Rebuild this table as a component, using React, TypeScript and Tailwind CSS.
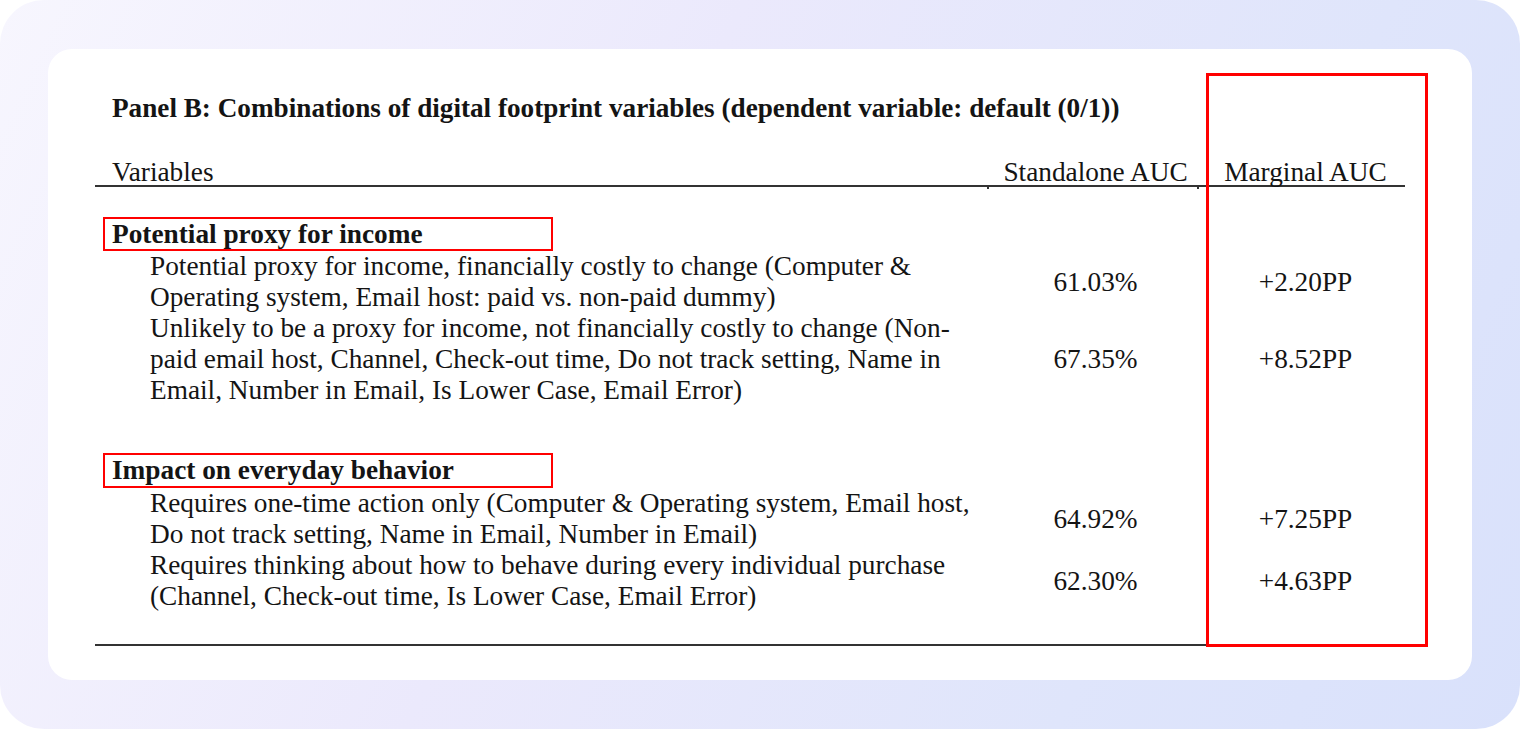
export default function App() {
  const rows1 = [
    {
      lines: [
        "Potential proxy for income, financially costly to change (Computer &",
        "Operating system, Email host: paid vs. non-paid dummy)",
      ],
      s: "61.03%",
      m: "+2.20PP",
    },
    {
      lines: [
        "Unlikely to be a proxy for income, not financially costly to change (Non-",
        "paid email host, Channel, Check-out time, Do not track setting, Name in",
        "Email, Number in Email, Is Lower Case, Email Error)",
      ],
      s: "67.35%",
      m: "+8.52PP",
    },
  ];
  const rows2 = [
    {
      lines: [
        "Requires one-time action only (Computer & Operating system, Email host,",
        "Do not track setting, Name in Email, Number in Email)",
      ],
      s: "64.92%",
      m: "+7.25PP",
    },
    {
      lines: [
        "Requires thinking about how to behave during every individual purchase",
        "(Channel, Check-out time, Is Lower Case, Email Error)",
      ],
      s: "62.30%",
      m: "+4.63PP",
    },
  ];

  const Row = ({ r }: { r: { lines: string[]; s: string; m: string } }) => (
    <div className="grid grid-cols-[890px_221px_199px] items-center">
      <div className="pl-[55px] text-[27.3px] leading-[31px]">
        {r.lines.map((l, i) => (
          <div key={i} className="whitespace-nowrap">
            {l}
          </div>
        ))}
      </div>
      <div className="text-center text-[27.3px] leading-[31px]">{r.s}</div>
      <div className="text-center text-[27.3px] leading-[31px]">{r.m}</div>
    </div>
  );

  return (
    <div className="w-[1520px] h-[736px] bg-white">
      <div className="w-[1520px] h-[729px] rounded-[44px] bg-[linear-gradient(115deg,#f7f6fe_0%,#ebe9fc_40%,#dfe5fb_75%,#d9e1fb_100%)] pt-[49px] px-[48px]">
        <div className="relative h-[631px] rounded-[24px] bg-white pl-[47px] pr-[67px] pt-[44px] font-['Liberation_Serif',serif] text-[#141414]">
          <div className="pl-[17px] text-[27.2px] font-bold leading-[30px] whitespace-nowrap">
            Panel B: Combinations of digital footprint variables (dependent variable: default (0/1))
          </div>

          <div className="relative mt-[34px] grid grid-cols-[890px_221px_199px] items-center border-b-2 border-[#333] h-[30px] text-[27.3px] leading-[31px]">
            <div className="pl-[17px]">Variables</div>
            <div className="text-center">Standalone AUC</div>
            <div className="text-center">Marginal AUC</div>
            <span className="absolute left-[892px] bottom-[-4px] h-[2px] w-[2px] bg-[#333]" />
            <span className="absolute left-[1102px] bottom-[-4px] h-[2px] w-[2px] bg-[#333]" />
          </div>

          <div className="mt-[30px] ml-[8px] w-[450px] h-[34px] border-2 border-[#ff0000] pl-[7px] text-[27.3px] font-bold leading-[30px]">
            Potential proxy for income
          </div>
          {rows1.map((r, i) => (
            <Row key={i} r={r} />
          ))}

          <div className="mt-[47px] ml-[8px] w-[450px] h-[35px] border-2 border-[#ff0000] pl-[7px] text-[27.3px] font-bold leading-[30px]">
            Impact on everyday behavior
          </div>
          {rows2.map((r, i) => (
            <Row key={i} r={r} />
          ))}

          <div className="mt-[32px] border-b-2 border-[#333]" />

          <div className="absolute left-[1158px] top-[24px] w-[222px] h-[574px] border-[3px] border-[#ff0000]" />
        </div>
      </div>
    </div>
  );
}
